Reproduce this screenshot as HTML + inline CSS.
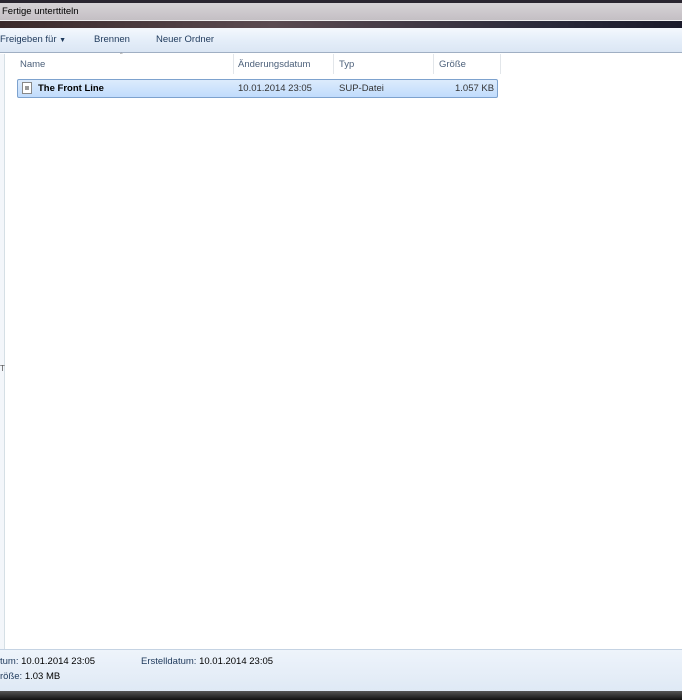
<!DOCTYPE html>
<html><head><style>
*{margin:0;padding:0;box-sizing:border-box}
body{width:682px;height:700px;overflow:hidden;font-family:"Liberation Sans",sans-serif;font-size:9.5px;color:#1e395b;background:#fff;position:relative}
.a{position:absolute}
</style></head><body>
<div class="a" style="left:0;top:0;width:682px;height:3px;background:#2a2630"></div>
<div class="a" style="left:0;top:3px;width:682px;height:18px;background:linear-gradient(#d6d3d6,#c4bfc4);border-bottom:1px solid #eee"></div>
<div class="a" style="left:2px;top:6px;color:#000">Fertige unterttiteln</div>
<div class="a" style="left:0;top:21px;width:682px;height:7px;background:linear-gradient(90deg,#3a2a2a,#5a4a50 40%,#2a2a3a 80%,#1a1a2a)"></div>
<div class="a" style="left:0;top:28px;width:682px;height:25px;background:linear-gradient(#f4f8fd,#e5eef9 50%,#dbe6f4);border-bottom:1px solid #a0afc3"></div>
<div class="a" style="left:0;top:34px;color:#1e395b">Freigeben für <span style="font-size:7px">▼</span></div>
<div class="a" style="left:94px;top:34px">Brennen</div>
<div class="a" style="left:156px;top:34px">Neuer Ordner</div>
<div class="a" style="left:0;top:54px;width:5px;height:596px;background:#f3f6fa;border-right:1px solid #d5dfe5"></div>
<div class="a" style="left:0;top:364px;font-size:8px;color:#555">T</div>
<div class="a" style="left:120px;top:52px;font-size:8px;color:#888">ˆ</div>
<div class="a" style="left:233px;top:54px;width:1px;height:20px;background:#e2e6ea"></div>
<div class="a" style="left:333px;top:54px;width:1px;height:20px;background:#e2e6ea"></div>
<div class="a" style="left:433px;top:54px;width:1px;height:20px;background:#e2e6ea"></div>
<div class="a" style="left:500px;top:54px;width:1px;height:20px;background:#e2e6ea"></div>
<div class="a" style="left:20px;top:59px;color:#4c607a">Name</div>
<div class="a" style="left:238px;top:59px;color:#4c607a">Änderungsdatum</div>
<div class="a" style="left:339px;top:59px;color:#4c607a">Typ</div>
<div class="a" style="left:439px;top:59px;color:#4c607a">Größe</div>
<div class="a" style="left:17px;top:79px;width:481px;height:19px;border:1px solid #7da2ce;border-radius:2px;background:linear-gradient(#dcebfc,#c1dcfc)"></div>
<div class="a" style="left:22px;top:82px;width:10px;height:12px;border:1px solid #888;background:#fff"><div style="margin:3px 2px;height:4px;background:#999"></div></div>
<div class="a" style="left:38px;top:83px;color:#000;font-weight:bold">The Front Line</div>
<div class="a" style="left:238px;top:83px;color:#333">10.01.2014 23:05</div>
<div class="a" style="left:339px;top:83px;color:#333">SUP-Datei</div>
<div class="a" style="left:455px;top:83px;color:#333">1.057 KB</div>
<div class="a" style="left:0;top:649px;width:682px;height:42px;background:linear-gradient(#eef4fb,#dfe9f5);border-top:1px solid #c5d3e3"></div>
<div class="a" style="left:0;top:656px;color:#1e395b">tum: <span style="color:#000">10.01.2014 23:05</span></div>
<div class="a" style="left:141px;top:656px;color:#1e395b">Erstelldatum: <span style="color:#000">10.01.2014 23:05</span></div>
<div class="a" style="left:0;top:671px;color:#1e395b">röße: <span style="color:#000">1.03 MB</span></div>
<div class="a" style="left:0;top:691px;width:682px;height:9px;background:linear-gradient(#555,#111)"></div>
</body></html>
